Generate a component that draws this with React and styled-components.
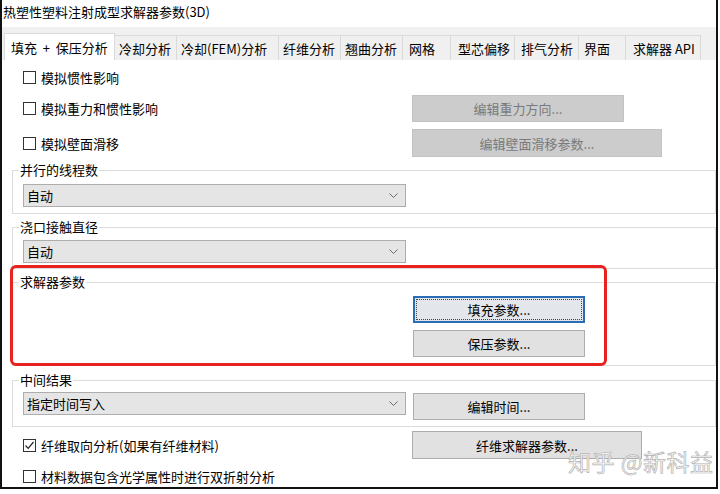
import styled, { createGlobalStyle, css } from 'styled-components';

const GlobalStyle = createGlobalStyle`
  body {
    margin: 0;
    background: #fff;
    font-family: "Noto Sans CJK SC", "Noto Sans", sans-serif;
  }
`;

const Frame = styled.div`
  position: relative;
  width: 718px;
  height: 489px;
  box-sizing: border-box;
  border: 2px solid #111;
  border-top: none;
  display: flex;
  flex-direction: column;
  font-size: 13px;
  color: #000;
  overflow: hidden;
`;

const TitleBar = styled.div`
  height: 27px;
  line-height: 24px;
  padding-left: 1px;
  white-space: nowrap;
  background: #fff;
`;

const TabStrip = styled.div`
  height: 33px;
  box-sizing: border-box;
  background: #f0f0f0;
  padding-left: 3px;
  display: flex;
  align-items: flex-end;
`;

const Tab = styled.div`
  width: ${p => p.$w}px;
  height: ${p => (p.$active ? 27 : 25)}px;
  box-sizing: border-box;
  margin-left: -1px;
  padding-left: ${p => p.$pad}px;
  border: 1px solid #dadada;
  border-bottom: none;
  background: ${p => (p.$active ? '#fff' : '#f0f0f0')};
  display: flex;
  align-items: center;
  white-space: pre;
  position: relative;
  z-index: ${p => (p.$active ? 1 : 0)};
`;

const Content = styled.div`
  flex: 1;
  background: #fff;
  padding-left: 10px;
  display: flex;
  flex-direction: column;
`;

const CheckRow = styled.div`
  display: flex;
  align-items: center;
  height: ${p => p.$h}px;
  margin-top: ${p => p.$mt}px;
  padding-left: 11px;
`;

const CheckLabel = styled.label`
  display: flex;
  align-items: center;
  gap: 5px;
  width: 389px;
  flex-shrink: 0;
  white-space: nowrap;
`;

const Box = styled.span`
  width: 13px;
  height: 13px;
  box-sizing: border-box;
  border: 1px solid #333;
  background: #fff;
  display: inline-flex;
  align-items: center;
  justify-content: center;
`;

const Button = styled.button`
  position: relative;
  width: ${p => p.$w}px;
  height: ${p => p.$h || 27}px;
  box-sizing: border-box;
  padding: 0;
  font: inherit;
  font-size: 13px;
  color: #000;
  background: #e1e1e1;
  border: 1px solid #adadad;
  margin-top: ${p => p.$mt || 0}px;
  flex-shrink: 0;

  ${p => p.disabled && css`
    background: #cccccc;
    border-color: #c2c2c2;
    color: #7a7a7a;
  `}

  ${p => p.$focus && css`
    border: 2px solid #2a6db5;
    background: #e3e6ea;
    &::after {
      content: '';
      position: absolute;
      inset: 1px;
      border: 1px dotted #444;
    }
  `}
`;

const Group = styled.fieldset`
  margin: ${p => p.$mt}px 0 0 0;
  padding: ${p => p.$pt}px 0 ${p => p.$pb}px 10px;
  border: 1px solid #dcdcdc;
  min-width: 0;
`;

const Legend = styled.legend`
  margin-left: -4px;
  padding: 0 1px;
  line-height: 16px;
  font-size: 13px;
`;

const SelectRow = styled.div`
  display: flex;
  align-items: flex-start;
  gap: 7px;
`;

const Select = styled.div`
  width: 383px;
  height: ${p => p.$h || 23}px;
  box-sizing: border-box;
  background: #e5e5e5;
  border: 1px solid #adadad;
  display: flex;
  align-items: center;
  justify-content: space-between;
  padding: 0 7px 0 3px;
  flex-shrink: 0;
`;

const ButtonStack = styled.div`
  display: flex;
  flex-direction: column;
  gap: 7px;
  padding-left: 390px;
`;

const Highlight = styled.div`
  position: absolute;
  left: 8px;
  top: 265px;
  width: 597px;
  height: 101px;
  box-sizing: border-box;
  border: 3px solid #e8221e;
  border-radius: 6px;
  pointer-events: none;
`;

const Watermark = styled.div`
  position: absolute;
  left: 566px;
  top: 444px;
  font-size: 23px;
  letter-spacing: 0.5px;
  color: rgba(250, 250, 250, 0.95);
  -webkit-text-stroke: 0.7px #b4b4b4;
  white-space: nowrap;
  pointer-events: none;
`;

const Chevron = () => (
  <svg width="9" height="5" viewBox="0 0 9 5">
    <path d="M0.5 0.5 L4.5 4.5 L8.5 0.5" fill="none" stroke="#666" strokeWidth="1" />
  </svg>
);

const Check = ({ checked, children }) => (
  <CheckLabel>
    <Box>
      {checked && (
        <svg width="11" height="11" viewBox="0 0 11 11">
          <path d="M1.5 5.5 L4.2 8.3 L9.5 2" fill="none" stroke="#222" strokeWidth="1.2" />
        </svg>
      )}
    </Box>
    {children}
  </CheckLabel>
);

const tabs = [
  { label: '填充  +  保压分析', w: 111, pad: 6, active: true },
  { label: '冷却分析', w: 63, pad: 4 },
  { label: '冷却(FEM)分析', w: 103, pad: 4 },
  { label: '纤维分析', w: 63, pad: 4 },
  { label: '翘曲分析', w: 63, pad: 4 },
  { label: '网格', w: 49, pad: 6 },
  { label: '型芯偏移', w: 65, pad: 7 },
  { label: '排气分析', w: 65, pad: 6 },
  { label: '界面', w: 48, pad: 5 },
  { label: '求解器 API', w: 76, pad: 7 },
];

export default function App() {
  return (
    <>
      <GlobalStyle />
      <Frame>
        <TitleBar>热塑性塑料注射成型求解器参数(3D)</TitleBar>
        <TabStrip>
          {tabs.map(t => (
            <Tab key={t.label} $w={t.w} $pad={t.pad} $active={t.active}>
              {t.label}
            </Tab>
          ))}
        </TabStrip>
        <Content>
          <CheckRow $mt={4} $h={26}>
            <Check>模拟惯性影响</Check>
          </CheckRow>
          <CheckRow $mt={5} $h={27}>
            <Check>模拟重力和惯性影响</Check>
            <Button $w={212} disabled>编辑重力方向...</Button>
          </CheckRow>
          <CheckRow $mt={7} $h={28}>
            <Check>模拟壁面滑移</Check>
            <Button $w={250} $h={28} disabled>编辑壁面滑移参数...</Button>
          </CheckRow>

          <Group $mt={5} $pt={6} $pb={6}>
            <Legend>并行的线程数</Legend>
            <Select>自动<Chevron /></Select>
          </Group>

          <Group $mt={5} $pt={5} $pb={5}>
            <Legend>浇口接触直径</Legend>
            <Select>自动<Chevron /></Select>
          </Group>

          <Group $mt={5} $pt={6} $pb={8}>
            <Legend>求解器参数</Legend>
            <ButtonStack>
              <Button $w={172} $focus>填充参数...</Button>
              <Button $w={172}>保压参数...</Button>
            </ButtonStack>
          </Group>

          <Group $mt={6} $pt={4} $pb={6}>
            <Legend>中间结果</Legend>
            <SelectRow>
              <Select>指定时间写入<Chevron /></Select>
              <Button $w={172} $mt={1}>编辑时间...</Button>
            </SelectRow>
          </Group>

          <CheckRow $mt={4} $h={28}>
            <Check checked>纤维取向分析(如果有纤维材料)</Check>
            <Button $w={230} $h={28}>纤维求解器参数...</Button>
          </CheckRow>
          <CheckRow $mt={6} $h={22}>
            <Check>材料数据包含光学属性时进行双折射分析</Check>
          </CheckRow>
        </Content>
        <Highlight />
        <Watermark>知乎 @新科益</Watermark>
      </Frame>
    </>
  );
}
